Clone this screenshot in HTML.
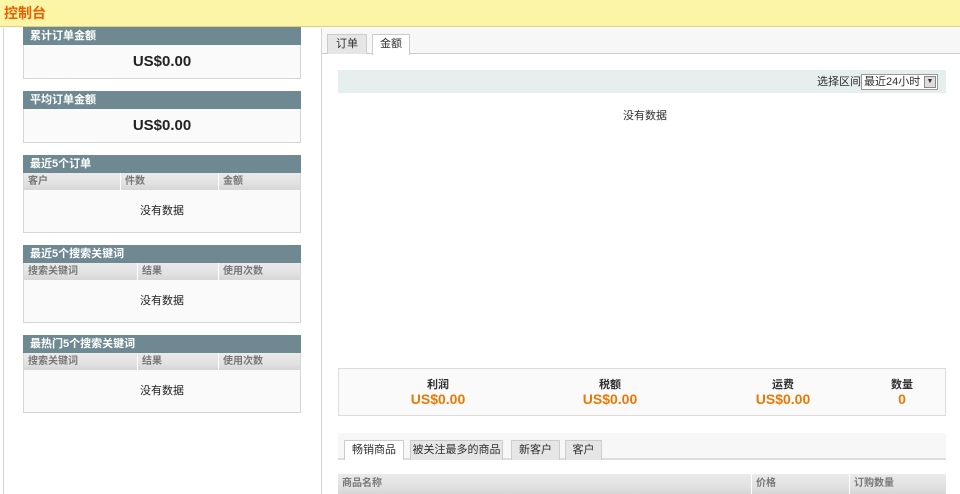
<!DOCTYPE html>
<html><head><meta charset="utf-8"><style>
*{margin:0;padding:0;box-sizing:border-box}
body{width:960px;height:494px;overflow:hidden;background:#fff;font-family:"Liberation Sans","Noto Sans CJK SC",sans-serif;font-size:11px;line-height:13px;color:#2f2f2f;position:relative}
.a{position:absolute}
.hdr{left:0;top:0;width:960px;height:27px;background:#fdf5a6;border-bottom:1px solid #d8cf80;}
.hdr span{position:absolute;left:4px;top:5px;font-size:14px;line-height:17px;font-weight:bold;color:#eb5e00}
.vl{background:#d6d6d6;width:1px}
.bh{background:#6f8992;color:#fff;font-weight:bold;font-size:11px;padding:2px 0 0 7px;height:18px;line-height:15px}
.box{position:absolute;left:23px;width:278px;background:#fafafa;border:1px solid #d6d6d6;border-top:none}
.box .bh{margin-left:-1px;margin-right:-1px}
.big{text-align:center;font-size:15px;font-weight:bold;color:#222;line-height:33px}
.ch{height:17px;background:linear-gradient(#eaeaea,#e2e2e2 60%,#d6d6d6);display:flex;color:#777;font-size:10px;font-weight:bold;line-height:17px}
.ch div{padding-left:4px;border-right:1px solid #fff}
.nd{text-align:center;line-height:42px;color:#222}
.tab{position:absolute;height:20px;border:1px solid #ccc;border-bottom:none;text-align:center;line-height:19px;font-size:11px}
.tot{text-align:center;font-weight:bold;position:absolute;top:379px}
.tot b{display:block;color:#eb7800;font-size:14px;line-height:14px}
</style></head><body>
<div class="a hdr"><span>控制台</span></div>
<div class="a vl" style="left:3px;top:28px;height:466px"></div>
<div class="a vl" style="left:321px;top:28px;height:466px"></div>

<div class="box" style="top:27px"><div class="bh">累计订单金额</div><div class="big">US$0.00</div></div>
<div class="box" style="top:91px"><div class="bh">平均订单金额</div><div class="big">US$0.00</div></div>
<div class="box" style="top:155px"><div class="bh">最近5个订单</div><div class="ch"><div style="width:97px">客户</div><div style="width:98px">件数</div><div style="flex:1;border:none">金额</div></div><div class="nd">没有数据</div></div>
<div class="box" style="top:245px"><div class="bh">最近5个搜索关键词</div><div class="ch"><div style="width:114px">搜索关键词</div><div style="width:81px">结果</div><div style="flex:1;border:none">使用次数</div></div><div class="nd">没有数据</div></div>
<div class="box" style="top:335px"><div class="bh">最热门5个搜索关键词</div><div class="ch"><div style="width:114px">搜索关键词</div><div style="width:81px">结果</div><div style="flex:1;border:none">使用次数</div></div><div class="nd">没有数据</div></div>

<div class="a" style="left:322px;top:28px;width:638px;height:26px;background:#f7f7f7;border-bottom:1px solid #ccc"></div>
<div class="tab" style="left:327px;top:34px;width:40px;background:#e6e6e6">订单</div>
<div class="tab" style="left:372px;top:34px;width:38px;height:21px;background:#fff">金额</div>
<div class="a" style="left:338px;top:70px;width:608px;height:23px;background:#e7eeee"></div>
<div class="a" style="left:817px;top:76px;font-size:11px">选择区间:</div>
<div class="a" style="left:861px;top:74px;width:77px;height:16px;background:#fff;border:1px solid #999;font-size:11px;line-height:14px;padding-left:2px">最近24小时</div>
<div class="a" style="left:924px;top:76px;width:12px;height:12px;background:#ddd;border:1px solid #888;font-size:7px;line-height:10px;text-align:center">▼</div>
<div class="a" style="left:623px;top:110px">没有数据</div>

<div class="a" style="left:338px;top:368px;width:608px;height:48px;background:#fafafa;border:1px solid #ddd"></div>
<div class="tot" style="left:408px;width:60px">利润<b>US$0.00</b></div>
<div class="tot" style="left:580px;width:60px">税额<b>US$0.00</b></div>
<div class="tot" style="left:753px;width:60px">运费<b>US$0.00</b></div>
<div class="tot" style="left:887px;width:30px">数量<b>0</b></div>

<div class="a" style="left:338px;top:433px;width:608px;height:27px;background:#f7f7f7;border-bottom:2px solid #ddd"></div>
<div class="tab" style="left:344px;top:440px;width:60px;height:20px;background:#fff">畅销商品</div>
<div class="tab" style="left:410px;top:440px;width:93px;background:#e6e6e6">被关注最多的商品</div>
<div class="tab" style="left:511px;top:440px;width:49px;background:#e6e6e6">新客户</div>
<div class="tab" style="left:565px;top:440px;width:37px;background:#e6e6e6">客户</div>
<div class="a ch" style="left:338px;top:474px;width:608px;height:20px;line-height:20px"><div style="width:414px">商品名称</div><div style="width:98px">价格</div><div style="flex:1;border:none">订购数量</div></div>
</body></html>
